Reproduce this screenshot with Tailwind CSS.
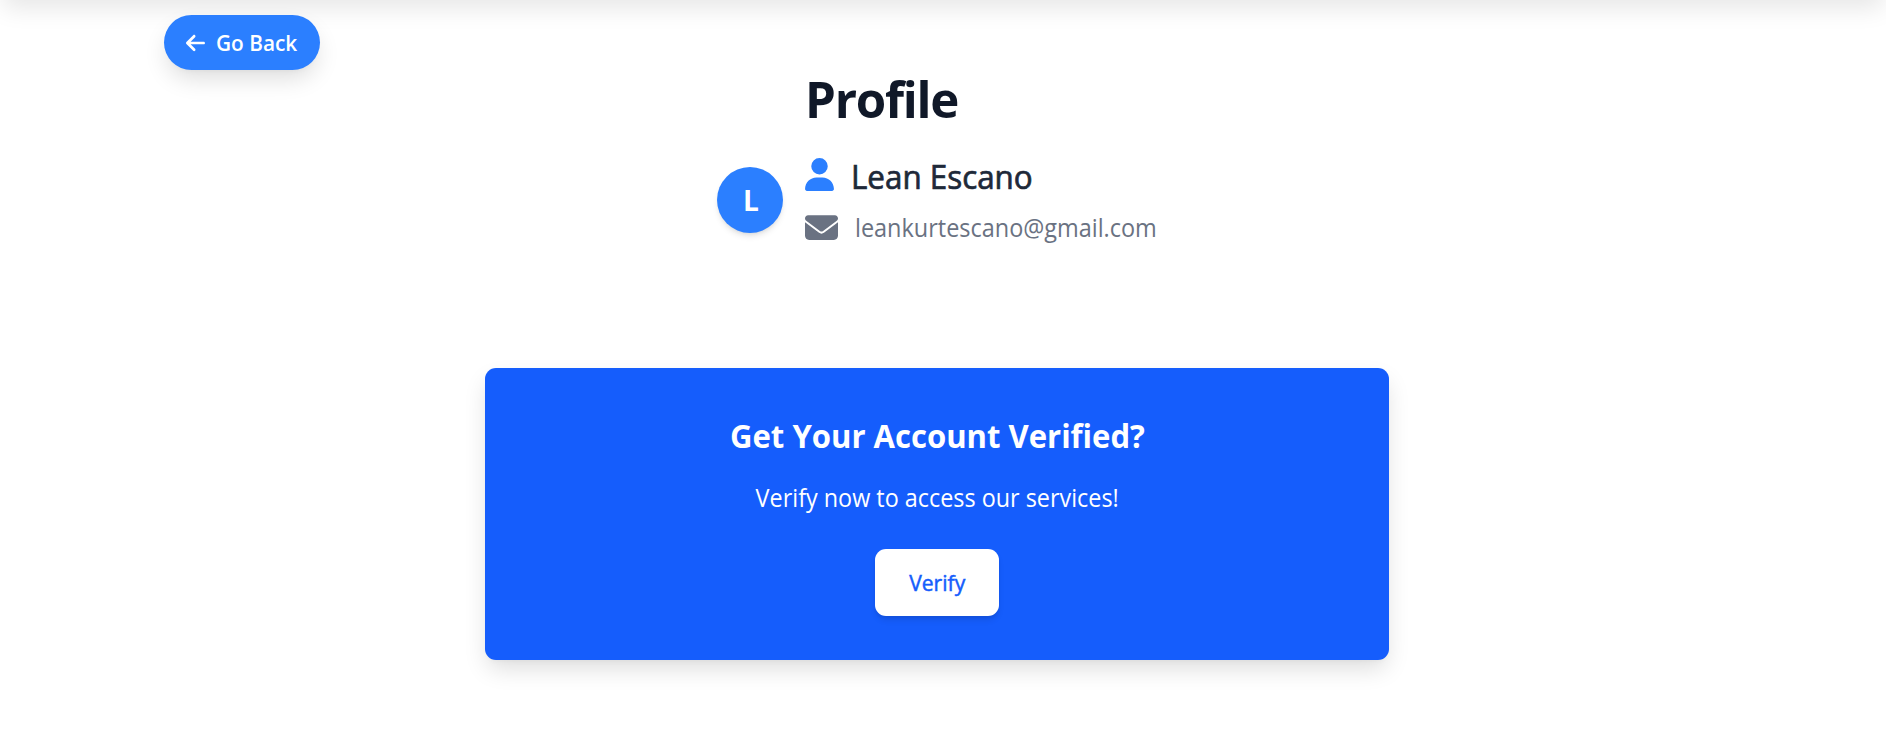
<!DOCTYPE html>
<html lang="en">
<head>
<meta charset="utf-8">
<title>Profile</title>
<script src="https://cdn.jsdelivr.net/npm/@tailwindcss/browser@4"></script>
</head>
<body class="h-[734px] overflow-hidden bg-white font-['Open_Sans','Noto_Sans',sans-serif]">
<header class="-mt-10 h-10 shadow-[0_11px_24px_-3.3px_rgba(0,0,0,0.1)]"></header>
<main class="relative h-[734px]">
  <button class="absolute left-[164px] top-[15px] flex h-[55px] w-[156px] items-center rounded-full bg-[#2b7fff] pl-[22px] text-white shadow-[0_11px_24px_-3.3px_rgba(0,0,0,0.14),0_4.4px_6.6px_-4.4px_rgba(0,0,0,0.05)]">
    <svg class="h-[22px] w-[19px] shrink-0" viewBox="0 0 448 512" fill="currentColor"><path d="M9.4 233.4c-12.5 12.5-12.5 32.8 0 45.3l160 160c12.500 12.500 32.800 12.500 45.300 0s12.500-32.800 0-45.300L109.200 288 416 288c17.700 0 32-14.300 32-32s-14.300-32-32-32l-306.700 0L214.600 118.600c12.500-12.500 12.500-32.800 0-45.300s-32.800-12.500-45.300 0l-160 160z"/></svg>
    <span class="ml-[11px] origin-left scale-x-[0.945] whitespace-nowrap text-[22px] font-semibold leading-[33px]">Go Back</span>
  </button>
  <section class="ml-[717px] flex h-[368px] pt-[65px]">
    <div class="mt-[102px] flex size-[66px] shrink-0 items-center justify-center rounded-full bg-[#2b7fff] pl-[2px] text-[28px] font-bold text-white shadow-[0_4.4px_6.6px_-1.1px_rgba(0,0,0,0.1),0_2.2px_4.400px_-2.200px_rgba(0,0,0,0.1)]">L</div>
    <div class="ml-[22px]">
      <h1 class="h-[66px] origin-left scale-x-[0.965] whitespace-nowrap text-[51px] font-bold leading-[66px] tracking-[-1.3px] text-[#101828]">Profile</h1>
      <div class="mt-[25px] flex h-[40px]">
        <svg class="mt-[2px] h-[33px] w-[29px] shrink-0 text-[#2b7fff]" viewBox="0 0 448 512" fill="currentColor"><path d="M224 256A128 128 0 1 0 224 0a128 128 0 1 0 0 256zm-45.700 48C79.800 304 0 383.800 0 482.300C0 498.700 13.300 512 29.700 512l388.600 0c16.400 0 29.700-13.300 29.700-29.700C448 383.800 368.200 304 269.700 304l-91.400 0z"/></svg>
        <span class="ml-[17px] mt-px origin-left scale-x-[0.98] whitespace-nowrap text-[32px] font-medium leading-[40px] text-[#1e2939] [-webkit-text-stroke:0.7px_#1e2939]">Lean Escano</span>
      </div>
      <div class="mt-[10px] flex h-[40px]">
        <svg class="mt-[5px] h-[33px] w-[33px] shrink-0 text-[#6a7282]" viewBox="0 0 512 512" fill="currentColor"><path d="M48 64C21.500 64 0 85.500 0 112c0 15.100 7.100 29.300 19.200 38.400L236.800 313.600c11.400 8.500 27 8.500 38.400 0L492.800 150.400c12.100-9.100 19.200-23.300 19.200-38.400c0-26.500-21.500-48-48-48L48 64zM0 176L0 384c0 35.300 28.700 64 64 64l384 0c35.300 0 64-28.700 64-64l0-208L294.400 339.200c-22.800 17.100-54 17.100-76.800 0L0 176z"/></svg>
        <span class="ml-[17px] mt-px origin-left scale-x-[0.938] whitespace-nowrap text-[25px] leading-[40px] text-[#6a7282]">leankurtescano@gmail.com</span>
      </div>
    </div>
  </section>
  <section class="ml-[485px] flex h-[292px] w-[904px] flex-col items-center rounded-[11px] bg-[#155dfc] pt-[47px] text-white shadow-[0_11px_24px_-3.3px_rgba(0,0,0,0.14),0_4.4px_6.6px_-4.4px_rgba(0,0,0,0.05)]">
    <h2 class="mt-px h-[40px] scale-x-[0.941] whitespace-nowrap text-[33px] font-bold leading-[40px]">Get Your Account Verified?</h2>
    <p class="mt-[21px] h-[40px] scale-x-[0.935] whitespace-nowrap text-[25px] leading-[40px]">Verify now to access our services!</p>
    <button class="mt-[32px] flex h-[67px] w-[124px] items-center justify-center rounded-[11px] bg-white text-[22px] font-medium text-[#155dfc] shadow-[0_4.4px_6.6px_-1.1px_rgba(0,0,0,0.1),0_2.2px_4.400px_-2.200px_rgba(0,0,0,0.1)]"><span class="scale-x-[0.96] [-webkit-text-stroke:0.5px_#155dfc]">Verify</span></button>
  </section>
</main>
</body>
</html>
